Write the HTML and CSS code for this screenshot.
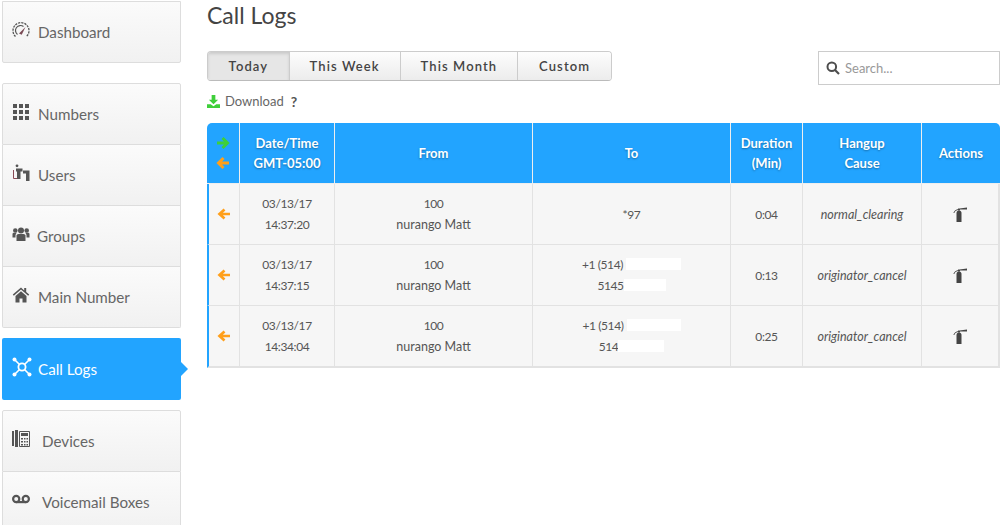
FILE: index.html
```html
<!DOCTYPE html>
<html lang="en">
<head>
  <meta charset="UTF-8" />
  <title>Call Logs</title>
  <link rel="stylesheet" href="styles.css">
</head>
<body>

  <!-- Side menu -->
  <nav class="sidebar">
    <div class="menu-group">
      <a class="menu-item">
        <svg class="menu-icon" viewBox="0 0 18 18"><path d="M3.500 15.500A8 8 0 1 1 14.500 15.500" fill="none" stroke="#555" stroke-width="1.300" stroke-dasharray="2.200 1"/><path d="M5.500 13.500a5 5 0 0 1 6-8" fill="none" stroke="#555" stroke-width="1.200"/><path d="M7 12.500l6.500-6.500-3.800 7.800z" fill="#7a4a55"/></svg>
        <span>Dashboard</span>
      </a>
    </div>

    <div class="menu-group">
      <a class="menu-item">
        <svg class="menu-icon" viewBox="0 0 18 18" fill="#555"><path d="M1 1h4v4H1zM7 1h4v4H7zM13 1h4v4h-4zM1 7h4v4H1zM7 7h4v4H7zM13 7h4v4h-4zM1 13h4v4H1zM7 13h4v4H7zM13 13h4v4h-4z"/></svg>
        <span>Numbers</span>
      </a>
      <a class="menu-item">
        <svg class="menu-icon" viewBox="0 0 18 18"><circle cx="5" cy="1.800" r="1.400" fill="#555"/><path d="M1.500 6v8.500h3.500" fill="none" stroke="#8a4a55"/><path d="M4 4.500h6.500v3H8.500v7.500H5V7.500H4zM11 6.500h6.500v10.500H14V9.500h-3z" fill="#555"/></svg>
        <span>Users</span>
      </a>
      <a class="menu-item">
        <svg class="menu-icon" viewBox="0 0 18 18" fill="#555"><circle cx="9" cy="5.500" r="3"/><circle cx="3.300" cy="5.500" r="2.300"/><circle cx="14.700" cy="5.500" r="2.300"/><path d="M4.500 10.500q0-1.500 2-1.500h5q2 0 2 1.500V16h-9z"/><path d="M0.500 9q0-1.200 1.500-1.200h2.800q-1.300 1-1.300 2.700v2H0.500zM17.500 9q0-1.200-1.500-1.200h-2.800q1.300 1 1.300 2.700v2h3z"/></svg>
        <span class="tight">Groups</span>
      </a>
      <a class="menu-item">
        <svg class="menu-icon" viewBox="0 0 18 18" fill="#555"><path d="M9 1.500L.8 8.600l1 1.200L9 3.600l7.200 6.200 1-1.200-3-2.600V2h-2v2.500z"/><path d="M3.500 10L9 5.300l5.500 4.700v6.500h-4v-4h-3v4h-4z"/></svg>
        <span>Main Number</span>
      </a>
    </div>

    <div class="menu-group">
      <a class="menu-item active">
        <svg class="menu-icon hub" viewBox="0 0 20 20"><circle cx="10" cy="10" r="3.600" fill="none" stroke="#fff" stroke-width="1.800"/><path d="M3 3l4.500 4.500M17 3l-4.500 4.500M3 17l4.500-4.500M17 17l-4.500-4.500" stroke="#fff" stroke-width="1.600"/><g fill="#fff"><circle cx="2.500" cy="2.500" r="2"/><circle cx="17.500" cy="2.500" r="2"/><circle cx="2.500" cy="17.500" r="2"/><circle cx="17.500" cy="17.500" r="2"/></g></svg>
        <span>Call Logs</span>
      </a>
    </div>

    <div class="menu-group">
      <a class="menu-item wide">
        <svg class="menu-icon" viewBox="0 0 18 18" fill="#555"><path d="M0 1h2v15H0zM3 0h3v17H3z"/><path d="M7.500 1.500h10v15h-10z" fill="none" stroke="#555"/><path d="M9 3h7v3H9zM9 8h2v1.500H9zM12 8h1.500v1.500H12zM14.500 8H16v1.500h-1.500zM9 11h2v1.500H9zM12 11h1.500v1.500H12zM14.500 11H16v1.500h-1.500zM9 14h2v1.500H9zM12 14h1.500v1.500H12zM14.500 14H16v1.500h-1.500z"/></svg>
        <span>Devices</span>
      </a>
      <a class="menu-item wide">
        <svg class="menu-icon" viewBox="0 0 18 18"><g fill="none" stroke="#555" stroke-width="2.200"><circle cx="4.200" cy="8" r="3.100"/><circle cx="13.800" cy="8" r="3.100"/><path d="M4.200 11.100h9.600"/></g></svg>
        <span>Voicemail Boxes</span>
      </a>
    </div>
  </nav>

  <main class="content">
    <h1>Call Logs</h1>

    <div class="toolbar">
      <div class="tabs">
        <button class="tab selected">Today</button>
        <button class="tab week">This Week</button>
        <button class="tab month">This Month</button>
        <button class="tab custom">Custom</button>
      </div>
      <div class="search">
        <svg class="search-icon" viewBox="0 0 14 14"><circle cx="5.800" cy="5.800" r="4.300" fill="none" stroke="#4d4d4d" stroke-width="2"/><path d="M9 9l4 4" stroke="#4d4d4d" stroke-width="2.200"/></svg>
        <input type="text" placeholder="Search...">
      </div>
    </div>

    <div class="download">
      <svg class="download-icon" viewBox="0 0 14 14" fill="#3fcf3a"><path d="M5 0h4v5h3L7 10 2 5h3z"/><path d="M0 10h4l3 2 3-2h4v4H0z"/></svg>
      <span>Download</span>
      <b class="help">?</b>
    </div>

    <!-- Log table -->
    <table class="logs">
      <colgroup>
        <col class="c-dir"><col class="c-date"><col class="c-num"><col class="c-num">
        <col class="c-dur"><col class="c-cause"><col class="c-act">
      </colgroup>
      <thead>
        <tr>
          <th class="dir">
            <svg class="arrow" viewBox="0 0 14 14"><path d="M1 7h10M6.500 2L11.500 7 6.500 12" fill="none" stroke="#3fcf3a" stroke-width="3"/></svg>
            <svg class="arrow" viewBox="0 0 14 14"><path d="M13 7H3M7.500 2L2.500 7 7.500 12" fill="none" stroke="#ff9f1a" stroke-width="3"/></svg>
          </th>
          <th>Date/Time<br>GMT-05:00</th>
          <th>From</th>
          <th>To</th>
          <th>Duration<br>(Min)</th>
          <th>Hangup<br>Cause</th>
          <th>Actions</th>
        </tr>
      </thead>
      <tbody>
        <tr>
          <td class="dir"><svg class="arrow" viewBox="0 0 14 14"><path d="M13 7H3M7.500 2.500L2.500 7 7.500 11.500" fill="none" stroke="#ff9f1a" stroke-width="2.700"/></svg></td>
          <td class="num">03/13/17<br>14:37:20</td>
          <td><span class="num">100</span><br>nurango Matt</td>
          <td class="num">*97</td>
          <td class="num">0:04</td>
          <td class="cause">normal_clearing</td>
          <td><svg class="action" viewBox="0 0 14 15"><path d="M3.500 6q0-2.500 2.500-2.500T8.500 6v9h-5z" fill="#444"/><path d="M5 1.500h2v2H5zM6.500 1.500l7.500-1v2H6.500z" fill="#444"/><path d="M5 2.500Q1.500 3 .8 6" fill="none" stroke="#555"/></svg></td>
        </tr>
        <tr>
          <td class="dir"><svg class="arrow" viewBox="0 0 14 14"><path d="M13 7H3M7.500 2.500L2.500 7 7.500 11.500" fill="none" stroke="#ff9f1a" stroke-width="2.700"/></svg></td>
          <td class="num">03/13/17<br>14:37:15</td>
          <td><span class="num">100</span><br>nurango Matt</td>
          <td class="num">+1 (514)<span class="redact r1"></span><br>5145<span class="redact r2"></span></td>
          <td class="num">0:13</td>
          <td class="cause">originator_cancel</td>
          <td><svg class="action" viewBox="0 0 14 15"><path d="M3.500 6q0-2.500 2.500-2.500T8.500 6v9h-5z" fill="#444"/><path d="M5 1.500h2v2H5zM6.500 1.500l7.500-1v2H6.500z" fill="#444"/><path d="M5 2.500Q1.500 3 .8 6" fill="none" stroke="#555"/></svg></td>
        </tr>
        <tr>
          <td class="dir"><svg class="arrow" viewBox="0 0 14 14"><path d="M13 7H3M7.500 2.500L2.500 7 7.500 11.500" fill="none" stroke="#ff9f1a" stroke-width="2.700"/></svg></td>
          <td class="num">03/13/17<br>14:34:04</td>
          <td><span class="num">100</span><br>nurango Matt</td>
          <td class="num">+1 (514)<span class="redact r3"></span><br>514<span class="redact r4"></span></td>
          <td class="num">0:25</td>
          <td class="cause">originator_cancel</td>
          <td><svg class="action" viewBox="0 0 14 15"><path d="M3.500 6q0-2.500 2.500-2.500T8.500 6v9h-5z" fill="#444"/><path d="M5 1.500h2v2H5zM6.500 1.500l7.500-1v2H6.500z" fill="#444"/><path d="M5 2.500Q1.500 3 .8 6" fill="none" stroke="#555"/></svg></td>
        </tr>
      </tbody>
    </table>
  </main>

</body>
</html>
```

FILE: styles.css
```css
html, body {
  height: 100%;
  overflow: hidden;
}
body {
  margin: 0;
  display: flex;
  font-family: "Lato", "Noto Sans", sans-serif;
  background: #fff;
  color: #444;
}

/* side menu */
.sidebar {
  width: 179px;
  margin-left: 2px;
  padding-top: 1px;
  flex-shrink: 0;
}
.menu-group {
  margin-bottom: 10px;
}
.menu-group:first-child {
  margin-bottom: 20px;
}
.menu-item {
  display: flex;
  align-items: center;
  gap: 8px;
  box-sizing: border-box;
  height: 61px;
  padding: 0 0 0 9px;
  border: 1px solid #ddd;
  border-top: none;
  background: linear-gradient(#fbfbfb, #f1f1f1);
  color: #666;
  font-size: 15.2px;
}
.menu-item:first-child {
  height: 62px;
  border-top: 1px solid #ddd;
  border-radius: 2px 2px 0 0;
}
.menu-item:last-child {
  border-radius: 0 0 2px 2px;
}
.menu-item span {
  padding-bottom: 1px;
}
.menu-item span.tight {
  margin-left: -1px;
}
.menu-item.wide {
  gap: 12px;
}
.menu-icon {
  width: 18px;
  height: 18px;
  margin-top: -5px;
  flex-shrink: 0;
}
.menu-icon.hub {
  width: 20px;
  height: 20px;
  margin-right: -2px;
}
.menu-item.active {
  position: relative;
  border: none;
  background: #22a4ff;
  color: #fff;
  border-radius: 2px;
  padding-left: 10px;
}
.menu-item.active::after {
  content: "";
  position: absolute;
  right: -7px;
  top: 24px;
  border-left: 7px solid #22a4ff;
  border-top: 7px solid transparent;
  border-bottom: 7px solid transparent;
}

/* main column */
.content {
  width: 793px;
  margin-left: 26px;
}
h1 {
  margin: 1px 0 0;
  height: 50px;
  font-size: 23px;
  font-weight: 400;
  line-height: 28px;
  color: #444;
}
.toolbar {
  display: flex;
  justify-content: space-between;
  align-items: flex-start;
}
.tabs {
  display: flex;
  box-sizing: border-box;
  height: 30px;
  width: 405px;
  border: 1px solid #ccc;
  border-bottom-color: #bbb;
  border-radius: 4px;
  overflow: hidden;
}
.tab {
  border: none;
  border-left: 1px solid #ccc;
  padding: 0;
  background: linear-gradient(#fdfdfd, #ececec);
  font-family: inherit;
  font-size: 13px;
  font-weight: 600;
  letter-spacing: 1.1px;
  color: #444;
  width: 118px;
}
.tab.selected {
  width: 81px;
  border-left: none;
  background: #e6e6e6;
  box-shadow: inset 0 2px 3px rgba(0,0,0,0.12);
}
.tab.week { width: 111px; }
.tab.custom { width: 94px; }
.search {
  display: flex;
  align-items: center;
  box-sizing: border-box;
  width: 182px;
  height: 34px;
  border: 1px solid #ccc;
  padding-left: 7px;
}
.search-icon {
  width: 14px;
  height: 14px;
}
.search input {
  border: none;
  outline: none;
  width: 140px;
  margin-left: 5px;
  padding: 0;
  font-family: inherit;
  font-size: 13px;
  background: transparent;
}
.search input::placeholder {
  color: #999;
}
.download {
  display: flex;
  align-items: center;
  margin-top: 3px;
  height: 26px;
  font-size: 13px;
  color: #666;
}
.download-icon {
  width: 13px;
  height: 13px;
  margin-right: 5px;
}
.help {
  margin-left: 7px;
  font-size: 14px;
  color: #555;
}

/* log table */
.logs {
  width: 793px;
  margin-top: 9px;
  table-layout: fixed;
  border-collapse: separate;
  border-spacing: 0;
  font-size: 12.5px;
  line-height: 21px;
  color: #555;
}
.c-dir { width: 32px; }
.c-date { width: 95px; }
.c-num { width: 198px; }
.c-dur { width: 72px; }
.c-cause { width: 119px; }
.c-act { width: 79px; }
.logs th {
  height: 60px;
  padding: 0;
  background: #22a4ff;
  color: #fff;
  font-size: 13px;
  font-weight: 700;
  line-height: 20px;
  text-shadow: 0 1px 2px rgba(0,0,0,0.35);
  border-left: 1px solid #eee;
  border-bottom: 1px solid #eee;
}
.logs th:first-child {
  border-left: none;
  border-radius: 5px 0 0 0;
}
.logs th:last-child {
  border-radius: 0 5px 0 0;
}
.logs td {
  height: 60px;
  padding: 0;
  text-align: center;
  background: #f6f6f6;
  border-left: 1px solid #e2e2e2;
  border-bottom: 1px solid #e2e2e2;
}
.logs td:first-child {
  border-left: 2px solid #22a4ff;
}
.logs td:last-child {
  border-right: 2px solid #e2e2e2;
}
.logs tr:last-child td {
  border-bottom-width: 2px;
}
.logs th.dir {
  line-height: 0;
}
.arrow {
  width: 14px;
  height: 14px;
  display: block;
  margin: 0 auto;
}
.arrow + .arrow {
  margin-top: 6px;
}
.num {
  font-size: 12px;
  letter-spacing: -0.4px;
}
.cause {
  font-style: italic;
}
.action {
  width: 14px;
  height: 15px;
  display: block;
  margin: 0 auto;
}
.redact {
  display: inline-block;
  height: 12px;
  background: #fff;
  vertical-align: -1px;
}
.r1 { width: 55px; margin-left: 3px; }
.r2 { width: 42px; }
.r3 { width: 54px; margin-left: 3px; }
.r4 { width: 46px; }
```
